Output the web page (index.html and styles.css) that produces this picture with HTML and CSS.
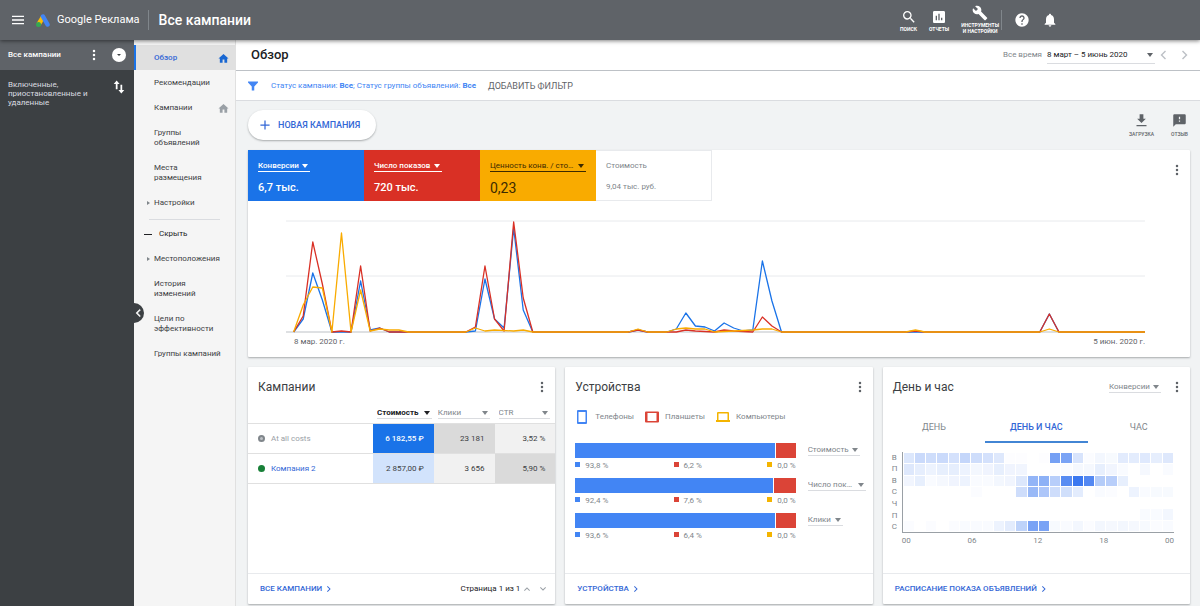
FILE: index.html
```html
<!DOCTYPE html>
<html lang="ru">
<head>
  <meta charset="UTF-8">
  <meta name="viewport" content="width=device-width, initial-scale=1.0">
  <title>Обзор</title>
  <link rel="stylesheet" href="styles.css">
</head>
<body>
  <!-- Icon set -->
  <svg class="sprite" aria-hidden="true">
    <symbol id="i-menu" viewBox="0 0 24 24"><path d="M3 18.500h18v-2H3v2zm0-5.500h18v-2H3v2zm0-7.500v2h18v-2H3z"/></symbol>
    <symbol id="i-more" viewBox="0 0 24 24"><path d="M12 6.500a2.500 2.500 0 1 0 0-5 2.500 2.500 0 0 0 0 5zm0 8a2.500 2.500 0 1 0 0-5 2.500 2.500 0 0 0 0 5zm0 8a2.500 2.500 0 1 0 0-5 2.500 2.500 0 0 0 0 5z"/></symbol>
    <symbol id="i-swap" viewBox="0 0 24 24"><path d="M8 1L3 7h3.500v9h3V7H13zM17.500 17V8h-3v9H11l5 6 5-6z"/></symbol>
    <symbol id="i-home" viewBox="0 0 24 24"><path d="M10 21v-7h4v7h6v-9h3L12 2 1 12h3v9z"/></symbol>
    <symbol id="i-search" viewBox="0 0 24 24"><path d="M15.500 14h-.79l-.28-.27A6.471 6.471 0 0 0 16 9.500 6.500 6.500 0 1 0 9.500 16c1.610 0 3.090-.59 4.230-1.570l.27.28v.79l5 4.990L20.490 19l-4.990-5zm-6 0C7.010 14 5 11.990 5 9.500S7.010 5 9.500 5 14 7.010 14 9.500 11.990 14 9.500 14z"/></symbol>
    <symbol id="i-report" viewBox="0 0 24 24"><path d="M19 3H5c-1.100 0-2 .9-2 2v14c0 1.100.9 2 2 2h14c1.100 0 2-.9 2-2V5c0-1.100-.9-2-2-2zM9 17H7v-7h2v7zm4 0h-2V7h2v10zm4 0h-2v-4h2v4z"/></symbol>
    <symbol id="i-tools" viewBox="0 0 24 24"><path d="M22.700 19l-9.100-9.100c.9-2.300.4-5-1.500-6.900-2-2-5-2.400-7.400-1.300L9 6 6 9 1.600 4.700C.4 7.100.9 10.100 2.900 12.100c1.900 1.900 4.600 2.400 6.900 1.500l9.100 9.100c.4.4 1 .4 1.400 0l2.300-2.300c.5-.4.5-1.100.1-1.400z"/></symbol>
    <symbol id="i-help" viewBox="0 0 24 24"><path d="M12 2C6.480 2 2 6.480 2 12s4.480 10 10 10 10-4.480 10-10S17.520 2 12 2zm1 17h-2v-2h2v2zm2.070-7.750l-.9.920C13.450 12.900 13 13.500 13 15h-2v-.5c0-1.100.45-2.100 1.170-2.830l1.240-1.260c.37-.36.59-.86.59-1.410 0-1.100-.9-2-2-2s-2 .9-2 2H8c0-2.210 1.790-4 4-4s4 1.790 4 4c0 .88-.36 1.680-.93 2.250z"/></symbol>
    <symbol id="i-bell" viewBox="0 0 24 24"><path d="M12 22c1.100 0 2-.9 2-2h-4c0 1.100.89 2 2 2zm6-6v-5c0-3.070-1.640-5.640-4.500-6.320V4c0-.83-.67-1.500-1.500-1.500s-1.500.67-1.500 1.500v.68C7.630 5.360 6 7.920 6 11v5l-2 2v1h16v-1l-2-2z"/></symbol>
    <symbol id="i-filter" viewBox="0 0 24 24"><path d="M2 3h20v2l-7.500 8v8h-5v-8L2 5z"/></symbol>
    <symbol id="i-plus" viewBox="0 0 24 24"><path d="M23 13.500h-9.500V23h-3v-9.500H1v-3h9.500V1h3v9.500H23z"/></symbol>
    <symbol id="i-download" viewBox="0 0 24 24"><path d="M19 9h-4V2H9v7H5l7 7 7-7zM4 19v2h16v-2H4z"/></symbol>
    <symbol id="i-feedback" viewBox="0 0 24 24"><path d="M20 2H4c-1.100 0-2 .9-2 2v18l4-4h14c1.100 0 2-.9 2-2V4c0-1.100-.9-2-2-2zm-7 12h-2v-2h2v2zm0-4h-2V6h2v4z"/></symbol>
    <symbol id="i-right" viewBox="0 0 24 24"><path d="M8 3L6 5l7 7-7 7 2 2 9-9z"/></symbol>
    <symbol id="i-left" viewBox="0 0 24 24"><path d="M16 3l2 2-7 7 7 7-2 2-9-9z"/></symbol>
    <symbol id="i-up" viewBox="0 0 24 24"><path d="M3 16l2 2 7-7 7 7 2-2-9-9z"/></symbol>
    <symbol id="i-down" viewBox="0 0 24 24"><path d="M3 8l2-2 7 7 7-7 2 2-9 9z"/></symbol>
    <symbol id="i-phone" viewBox="0 0 14 14"><path fill-rule="evenodd" d="M3 0h8a1 1 0 0 1 1 1v12a1 1 0 0 1-1 1H3a1 1 0 0 1-1-1V1a1 1 0 0 1 1-1zM3.500 2v10h7V2z"/></symbol>
    <symbol id="i-tablet" viewBox="0 0 14 14"><path fill-rule="evenodd" d="M1 1.500h12a1 1 0 0 1 1 1v9a1 1 0 0 1-1 1H1a1 1 0 0 1-1-1v-9a1 1 0 0 1 1-1zM2.500 3v8h9V3z"/></symbol>
    <symbol id="i-laptop" viewBox="0 0 14 14"><path fill-rule="evenodd" d="M2 2h10a1 1 0 0 1 1 1v7h1v2H0v-2h1V3a1 1 0 0 1 1-1zM2.500 3.500V10h9V3.500z"/></symbol>
  </svg>

  <header class="topbar">
    <button class="icon-btn menu-btn" aria-label="Меню"><svg class="icon"><use href="#i-menu"/></svg></button>
    <a class="logo" href="#">
      <svg class="logo-mark" viewBox="0 0 28 26">
        <path d="M5 21L14 6" stroke="#fbbc04" stroke-width="9"/>
        <path d="M14 5L23 21" stroke="#4285f4" stroke-width="9" stroke-linecap="round"/>
        <circle cx="5" cy="21" r="5" fill="#34a853"/>
      </svg>
      <span>Google Реклама</span>
    </a>
    <h1 class="topbar-title">Все кампании</h1>
    <nav class="tools">
      <button class="tool"><svg class="icon"><use href="#i-search"/></svg>ПОИСК</button>
      <button class="tool"><svg class="icon"><use href="#i-report"/></svg>ОТЧЕТЫ</button>
      <button class="tool tool-settings"><svg class="icon"><use href="#i-tools"/></svg>ИНСТРУМЕНТЫ<br>И НАСТРОЙКИ</button>
      <button class="icon-btn" aria-label="Справка"><svg class="icon"><use href="#i-help"/></svg></button>
      <button class="icon-btn" aria-label="Уведомления"><svg class="icon"><use href="#i-bell"/></svg></button>
    </nav>
  </header>

  <div class="layout">
    <aside class="accounts">
      <div class="accounts-head">
        <span>Все кампании</span>
        <button class="icon-btn" aria-label="Ещё"><svg class="icon"><use href="#i-more"/></svg></button>
        <button class="round-btn" aria-label="Развернуть"></button>
      </div>
      <div class="accounts-filter">
        <span>Включенные, приостановленные и удаленные</span>
        <button class="icon-btn" aria-label="Сортировка"><svg class="icon"><use href="#i-swap"/></svg></button>
      </div>
    </aside>

    <nav class="sidenav">
      <button class="collapse" aria-label="Свернуть"><svg class="icon"><use href="#i-left"/></svg></button>
      <a class="nav-item active" href="#">Обзор<svg class="icon"><use href="#i-home"/></svg></a>
      <a class="nav-item" href="#">Рекомендации</a>
      <a class="nav-item" href="#">Кампании<svg class="icon"><use href="#i-home"/></svg></a>
      <a class="nav-item" href="#">Группы<br>объявлений</a>
      <a class="nav-item" href="#">Места<br>размещения</a>
      <a class="nav-item expandable" href="#">Настройки</a>
      <hr>
      <button class="nav-item nav-hide">Скрыть</button>
      <a class="nav-item expandable" href="#">Местоположения</a>
      <a class="nav-item" href="#">История<br>изменений</a>
      <a class="nav-item" href="#">Цели по<br>эффективности</a>
      <a class="nav-item" href="#">Группы кампаний</a>
    </nav>

    <main class="main">
      <div class="page-head">
        <h2>Обзор</h2>
        <label class="period-label" for="period">Все время</label>
        <span class="picker picker-period"><select id="period"><option>8 март – 5 июнь 2020</option></select></span>
        <button class="icon-btn" aria-label="Назад"><svg class="icon"><use href="#i-left"/></svg></button>
        <button class="icon-btn" aria-label="Вперёд"><svg class="icon"><use href="#i-right"/></svg></button>
      </div>

      <div class="filters">
        <svg class="icon"><use href="#i-filter"/></svg>
        <a href="#">Статус кампании: <b>Все</b>; Статус группы объявлений: <b>Все</b></a>
        <button class="add-filter">ДОБАВИТЬ ФИЛЬТР</button>
      </div>

      <div class="content">
        <div class="actions">
          <button class="new-campaign"><svg class="icon"><use href="#i-plus"/></svg>НОВАЯ КАМПАНИЯ</button>
          <button class="action"><svg class="icon"><use href="#i-download"/></svg>ЗАГРУЗКА</button>
          <button class="action"><svg class="icon"><use href="#i-feedback"/></svg>ОТЗЫВ</button>
        </div>

        <section class="card summary">
          <div class="scores">
            <div class="score blue">
              <span class="picker"><select aria-label="Показатель 1"><option>Конверсии</option></select></span>
              <strong>6,7 тыс.</strong>
            </div>
            <div class="score red">
              <span class="picker"><select aria-label="Показатель 2"><option>Число показов</option></select></span>
              <strong>720 тыс.</strong>
            </div>
            <div class="score yellow">
              <span class="picker"><select aria-label="Показатель 3"><option>Ценность конв. / стоимость</option></select></span>
              <strong>0,23</strong>
            </div>
            <div class="score plain">
              <span>Стоимость</span>
              <strong>9,04 тыс. руб.</strong>
            </div>
            <button class="icon-btn more" aria-label="Ещё"><svg class="icon"><use href="#i-more"/></svg></button>
          </div>
          <div class="chart">
            <!-- one day is 10 units wide, the baseline is at y = 112 -->
            <svg viewBox="-8 0 898 114" preserveAspectRatio="none">
              <path class="grid-line" d="M-8 1H890M-8 56H890"/>
              <path class="grid-line base" d="M-8 112H890"/>
              <polyline class="line-blue" points="0,112 10,99 20,53 30,80 40,112 60,112 70,61 80,110 90,108 100,112 180,112 190,111 200,59 210,99 220,108 230,8 240,90 250,112 350,112 360,110 370,112 390,112 400,109 410,93 420,106 430,107 440,111 450,103 460,108 470,111 480,110 490,41 500,81 510,112 780,112 790,94 800,112 890,112"/>
              <polyline class="line-red" points="0,112 10,96 20,22 30,64 40,112 50,111 60,112 70,46 80,111 90,108 100,112 180,112 190,107 200,46 210,99 220,111 230,2 240,78 250,112 350,112 360,110 370,112 400,112 410,110 420,111 440,112 450,110 460,111 480,112 490,97 500,106 510,112 640,112 650,111 660,112 780,112 790,94 800,112 890,112"/>
              <polyline class="line-yellow" points="0,112 10,85 20,67 30,68 40,112 50,13 60,112 70,70 80,111 90,109 100,110 110,110 120,112 180,112 190,108 200,111 210,110 230,111 240,110 250,112 350,112 360,109 370,112 390,112 400,109 410,108 420,109 430,109 440,112 460,111 480,110 490,109 500,109 510,112 640,112 650,110 660,112 780,112 790,109 800,112 890,112"/>
            </svg>
            <div class="chart-dates"><span>8 мар. 2020 г.</span><span>5 июн. 2020 г.</span></div>
          </div>
        </section>

        <div class="cards">
          <section class="card">
            <div class="card-head">
              <h3>Кампании</h3>
              <button class="icon-btn more" aria-label="Ещё"><svg class="icon"><use href="#i-more"/></svg></button>
            </div>
            <table class="campaigns">
              <thead>
                <tr>
                  <th></th>
                  <th class="sorted"><span class="picker"><select aria-label="Столбец 1"><option>Стоимость</option></select></span></th>
                  <th><span class="picker"><select aria-label="Столбец 2"><option>Клики</option></select></span></th>
                  <th><span class="picker"><select aria-label="Столбец 3"><option>CTR</option></select></span></th>
                </tr>
              </thead>
              <tbody>
                <tr>
                  <td class="name paused"><i class="dot"></i>At all costs</td>
                  <td class="heat-top">6 182,55 ₽</td>
                  <td class="gray-2">23 181</td>
                  <td class="gray-1">3,52 %</td>
                </tr>
                <tr>
                  <td class="name"><i class="dot"></i><a href="#">Компания 2</a></td>
                  <td class="heat-low">2 857,00 ₽</td>
                  <td class="gray-1">3 656</td>
                  <td class="gray-2">5,90 %</td>
                </tr>
              </tbody>
            </table>
            <div class="card-foot">
              <a href="#">ВСЕ КАМПАНИИ<svg class="icon"><use href="#i-right"/></svg></a>
              <span class="pager">Страница 1 из 1
                <button class="icon-btn" aria-label="Предыдущая"><svg class="icon"><use href="#i-up"/></svg></button>
                <button class="icon-btn" aria-label="Следующая"><svg class="icon"><use href="#i-down"/></svg></button>
              </span>
            </div>
          </section>

          <section class="card">
            <div class="card-head">
              <h3>Устройства</h3>
              <button class="icon-btn more" aria-label="Ещё"><svg class="icon"><use href="#i-more"/></svg></button>
            </div>
            <div class="legend">
              <span><svg class="icon c-blue"><use href="#i-phone"/></svg>Телефоны</span>
              <span><svg class="icon c-red"><use href="#i-tablet"/></svg>Планшеты</span>
              <span><svg class="icon c-yellow"><use href="#i-laptop"/></svg>Компьютеры</span>
            </div>
            <div class="devices">
              <div class="device-row">
                <div class="device-data">
                  <div class="bar"><i style="width: 91%"></i></div>
                  <div class="shares"><span>93,8 %</span><span>6,2 %</span><span>0,0 %</span></div>
                </div>
                <span class="picker"><select aria-label="Полоса 1"><option>Стоимость</option></select></span>
              </div>
              <div class="device-row">
                <div class="device-data">
                  <div class="bar"><i style="width: 90%"></i></div>
                  <div class="shares"><span>92,4 %</span><span>7,6 %</span><span>0,0 %</span></div>
                </div>
                <span class="picker"><select aria-label="Полоса 2"><option>Число показов</option></select></span>
              </div>
              <div class="device-row">
                <div class="device-data">
                  <div class="bar"><i style="width: 91%"></i></div>
                  <div class="shares"><span>93,6 %</span><span>6,4 %</span><span>0,0 %</span></div>
                </div>
                <span class="picker"><select aria-label="Полоса 3"><option>Клики</option></select></span>
              </div>
            </div>
            <div class="card-foot">
              <a href="#">УСТРОЙСТВА<svg class="icon"><use href="#i-right"/></svg></a>
            </div>
          </section>

          <section class="card">
            <div class="card-head">
              <h3>День и час</h3>
              <span class="picker"><select aria-label="Показатель"><option>Конверсии</option></select></span>
              <button class="icon-btn more" aria-label="Ещё"><svg class="icon"><use href="#i-more"/></svg></button>
            </div>
            <div class="tabs">
              <button>ДЕНЬ</button>
              <button class="active">ДЕНЬ И ЧАС</button>
              <button>ЧАС</button>
            </div>
            <div class="heatmap">
              <div class="days"><span>В</span><span>П</span><span>В</span><span>С</span><span>Ч</span><span>П</span><span>С</span></div>
              <div class="cells" id="cells"></div>
              <div class="hours"><span>00</span><span>06</span><span>12</span><span>18</span><span>00</span></div>
            </div>
            <div class="card-foot">
              <a href="#">РАСПИСАНИЕ ПОКАЗА ОБЪЯВЛЕНИЙ<svg class="icon"><use href="#i-right"/></svg></a>
            </div>
          </section>
        </div>
      </div>
    </main>
  </div>

  <script src="script.js"></script>
</body>
</html>
```
FILE: styles.css
```css
* {
  margin: 0;
  padding: 0;
  box-sizing: border-box;
}

body {
  font-family: Roboto, "Liberation Sans", sans-serif;
  font-size: 8px;
  line-height: 10px;
  color: #3c4043;
  background: #f1f3f4;
  min-height: 100vh;
  display: flex;
  flex-direction: column;
}

a {
  color: #3367d6;
  text-decoration: none;
}

button,
select {
  font: inherit;
  color: inherit;
  background: none;
  border: none;
  cursor: pointer;
}

.sprite {
  display: none;
}

.icon {
  width: 12px;
  height: 12px;
  fill: currentColor;
  flex: none;
}

.icon-btn {
  display: flex;
  flex: none;
}

/* Drop-down with a thin underline and a triangle */
.picker {
  display: inline-flex;
  align-items: center;
  gap: 3px;
  height: 12px;
  border-bottom: 1px solid #dadce0;
  color: #80868b;
  max-width: 100%;
}

.picker select {
  appearance: none;
  outline: none;
  min-width: 0;
  height: 11px;
  text-overflow: ellipsis;
}

.picker::after {
  content: "";
  flex: none;
  margin-left: auto;
  margin-right: 2px;
  border: 3px solid transparent;
  border-top: 4px solid currentColor;
  border-bottom: none;
}

/* Top bar */
.topbar {
  height: 40px;
  display: flex;
  align-items: center;
  background: #5f6368;
  color: #fff;
  padding: 0 142px 0 10px;
  box-shadow: 0 1px 4px rgba(0, 0, 0, 0.5);
  position: relative;
  z-index: 2;
}

.menu-btn .icon {
  width: 16px;
  height: 16px;
}

.logo {
  display: flex;
  align-items: center;
  gap: 7px;
  margin-left: 10px;
  padding-right: 8px;
  height: 20px;
  color: #fff;
  font-size: 11px;
  border-right: 1px solid #80868b;
}

.logo-mark {
  width: 14px;
  height: 13px;
}

.topbar-title {
  font-size: 14px;
  font-weight: 500;
  margin-left: 10px;
}

.tools {
  margin-left: auto;
  display: flex;
  align-items: center;
  gap: 12px;
}

.tools .icon {
  width: 16px;
  height: 16px;
}

.tool {
  display: flex;
  flex-direction: column;
  align-items: center;
  font-size: 5px;
  font-weight: 700;
  line-height: 6px;
}

.tool .icon {
  margin-bottom: 1px;
}

.tool-settings {
  padding-bottom: 2px;
}

.tool-settings + .icon-btn {
  border-left: 1px solid #80868b;
  padding: 2px 0 2px 12px;
  margin-left: -10px;
}

.layout {
  flex: 1;
  display: flex;
}

/* Account column */
.accounts {
  width: 134px;
  flex: none;
  background: #3c4043;
  color: #dadce0;
}

.accounts-head,
.accounts-filter {
  display: flex;
  align-items: center;
  padding: 0 8px;
}

.accounts-head {
  height: 30px;
  gap: 12px;
  background: #5f6368;
  color: #fff;
  font-weight: 500;
}

.accounts-head span,
.accounts-filter span {
  flex: 1;
}

.accounts-filter {
  align-items: flex-start;
  padding-top: 10px;
  line-height: 9px;
}

.accounts-filter .icon {
  width: 14px;
  height: 14px;
  color: #fff;
}

.round-btn {
  width: 14px;
  height: 14px;
  border-radius: 50%;
  background: #fff;
  display: flex;
  align-items: center;
  justify-content: center;
}

.round-btn::after {
  content: "";
  border: 2px solid transparent;
  border-top-color: #3c4043;
  border-bottom: none;
}

/* Section navigation */
.sidenav {
  width: 102px;
  flex: none;
  padding-top: 5px;
  background: #f5f5f5;
  border-right: 1px solid #e0e0e0;
  position: relative;
}

.nav-item {
  display: flex;
  align-items: center;
  width: 100%;
  min-height: 25px;
  padding: 8px 6px 7px 20px;
  color: #3c4043;
  white-space: nowrap;
}

.nav-item .icon {
  width: 11px;
  height: 11px;
  margin: -1px 0 -1px auto;
  color: #9aa0a6;
}

.nav-item.active {
  padding-left: 18px;
  border-left: 2px solid #1a73e8;
  background: #e0e0e0;
  color: #3367d6;
  font-weight: 500;
}

.nav-item.active .icon {
  color: #1967d2;
}

.expandable {
  padding-left: 13px;
}

.expandable::before {
  content: "";
  border: 2px solid transparent;
  border-left: 3px solid #80868b;
  border-right: none;
  margin-right: 4px;
}

.sidenav hr {
  border: none;
  border-top: 1px solid #dadce0;
  margin: 4px 15px 1px;
}

.nav-hide {
  padding-left: 10px;
  color: #202124;
}

.nav-hide::before {
  content: "";
  width: 8px;
  height: 1px;
  background: #202124;
  margin-right: 7px;
}

.collapse {
  position: absolute;
  left: 0;
  top: 263px;
  width: 10px;
  height: 20px;
  border-radius: 0 10px 10px 0;
  background: #3c4043;
  color: #fff;
  display: flex;
  align-items: center;
  justify-content: center;
}

.collapse .icon {
  width: 10px;
  height: 10px;
  margin-right: 3px;
  stroke: #fff;
}

/* Main column */
.main {
  flex: 1;
  min-width: 0;
}

.page-head,
.filters {
  display: flex;
  align-items: center;
  background: #fff;
  padding: 0 9px 0 15px;
}

.page-head {
  height: 31px;
  border-bottom: 1px solid #bdc1c6;
}

.page-head h2 {
  flex: 1;
  font-size: 13px;
  font-weight: 500;
  color: #202124;
}

.period-label {
  color: #80868b;
  margin-right: 5px;
}

.picker-period {
  width: 108px;
  height: 18px;
  margin-right: 2px;
  color: #202124;
}

.picker-period::after {
  border-top-color: #5f6368;
}

.page-head .icon-btn {
  color: #bdc1c6;
}

.page-head .icon-btn + .icon-btn {
  margin-left: 10px;
}

.filters {
  height: 30px;
  padding-left: 11px;
  border-bottom: 1px solid #dadce0;
}

.filters .icon {
  color: #4285f4;
  margin-right: 12px;
}

.filters a {
  color: #4285f4;
}

.add-filter {
  margin-left: 12px;
  color: #5f6368;
  font-size: 9px;
}

.content {
  padding: 9px 10px 2px 12px;
}

.actions {
  display: flex;
  align-items: center;
  gap: 17px;
  padding-right: 2px;
  margin-bottom: 10px;
}

.new-campaign {
  display: flex;
  align-items: center;
  gap: 8px;
  height: 30px;
  padding: 0 16px 0 12px;
  margin-right: auto;
  border-radius: 15px;
  background: #fff;
  color: #3367d6;
  font-size: 9px;
  font-weight: 500;
  box-shadow: 0 1px 2px rgba(60, 64, 67, 0.4);
}

.new-campaign .icon {
  width: 10px;
  height: 10px;
}

.action {
  display: flex;
  flex-direction: column;
  align-items: center;
  gap: 2px;
  color: #5f6368;
  font-size: 5px;
  font-weight: 500;
  line-height: 8px;
}

.action .icon {
  width: 15px;
  height: 15px;
}

.card {
  background: #fff;
  border-radius: 1px;
  box-shadow: 0 1px 2px rgba(60, 64, 67, 0.4);
}

.more {
  color: #5f6368;
}

/* Scores and line chart */
.scores {
  display: flex;
}

.score {
  width: 116px;
  height: 51px;
  padding: 10px 10px 8px;
  display: flex;
  flex-direction: column;
  align-items: flex-start;
  justify-content: space-between;
  color: #fff;
}

.score .picker {
  color: inherit;
  border-color: currentColor;
  font-weight: 500;
}

.score strong {
  font-size: 11px;
  font-weight: 500;
}

.score.blue {
  background: #1a73e8;
}

.score.red {
  background: #d93025;
}

.score.yellow {
  background: #f9ab00;
  color: #3c2a00;
}

.score.yellow .picker {
  font-weight: 400;
}

.score.yellow strong {
  font-size: 14px;
  font-weight: 400;
}

.score.plain {
  color: #80868b;
  border: 1px solid #e8eaed;
  border-left: none;
}

.score.plain strong {
  font-size: 8px;
  font-weight: 400;
}

.scores .more {
  margin: 14px 7px 0 auto;
  align-self: flex-start;
}

.chart {
  padding: 19px 45px 10px 38px;
}

.chart svg {
  display: block;
  width: 100%;
  height: 114px;
  overflow: visible;
}

.chart path,
.chart polyline {
  fill: none;
  stroke-width: 1.3;
  stroke-linejoin: round;
  vector-effect: non-scaling-stroke;
}

.chart .grid-line {
  stroke: #e8eaed;
  stroke-width: 1;
}

.chart .base {
  stroke: #bdc1c6;
}

.chart .line-blue {
  stroke: #1a73e8;
}

.chart .line-red {
  stroke: #d93025;
}

.chart .line-yellow {
  stroke: #f9ab00;
}

.chart-dates {
  display: flex;
  justify-content: space-between;
  padding: 3px 0 0 8px;
  color: #5f6368;
}

/* Bottom cards */
.cards {
  display: grid;
  grid-template-columns: repeat(3, 1fr);
  gap: 10px;
  margin-top: 10px;
}

.cards .card {
  min-height: 237px;
  min-width: 0;
  display: flex;
  flex-direction: column;
}

.card-head {
  display: flex;
  align-items: center;
  gap: 10px;
  height: 40px;
  padding: 0 7px 0 10px;
  flex: none;
}

.card-head h3 {
  flex: 1;
  font-size: 12px;
  font-weight: 400;
}

.card-foot {
  display: flex;
  align-items: center;
  justify-content: space-between;
  height: 31px;
  margin-top: auto;
  padding: 0 8px 0 12px;
  border-top: 1px solid #e8eaed;
  font-weight: 500;
}

.card-foot a,
.pager {
  display: flex;
  align-items: center;
  gap: 3px;
}

.card-foot .icon {
  width: 8px;
  height: 8px;
}

.pager {
  font-weight: 400;
  color: #202124;
}

.pager .icon-btn {
  color: #9aa0a6;
}

.pager .icon-btn + .icon-btn {
  margin-left: 5px;
}

.campaigns {
  width: 100%;
  table-layout: fixed;
  border-collapse: collapse;
}

.campaigns th {
  height: 15px;
  padding: 0 5px 4px 4px;
  font-weight: 400;
  text-align: left;
}

.campaigns th:first-child {
  width: 125px;
}

.campaigns .picker {
  display: flex;
}

.campaigns .sorted {
  padding-right: 2px;
}

.campaigns .sorted .picker {
  color: #202124;
  font-weight: 700;
}

.campaigns td {
  height: 30px;
  padding: 0 10px;
  border-top: 1px solid #e0e0e0;
  border-bottom: 1px solid #e0e0e0;
  text-align: right;
}

.campaigns .name {
  text-align: left;
}

.campaigns .paused {
  color: #9aa0a6;
}

.dot {
  display: inline-block;
  width: 7px;
  height: 7px;
  margin-right: 6px;
  border-radius: 50%;
  background: #188038;
  vertical-align: -1px;
}

.paused .dot {
  background: #bdc1c6;
  border: 2px solid #80868b;
}

.campaigns .heat-top {
  background: #1a73e8;
  color: #fff;
  font-weight: 500;
}

.campaigns .heat-low {
  background: #d2e3fc;
}

.gray-1 {
  background: #f1f1f1;
}

.gray-2 {
  background: #dadada;
}

/* Devices */
.legend {
  display: flex;
  gap: 11px;
  padding: 3px 10px 0;
  color: #80868b;
}

.legend span {
  display: flex;
  align-items: center;
  gap: 6px;
}

.legend .icon {
  width: 14px;
  height: 14px;
}

.c-blue {
  color: #4285f4;
}

.c-red {
  color: #db4437;
}

.c-yellow {
  color: #f4b400;
}

.devices {
  display: flex;
  flex-direction: column;
  gap: 7px;
  padding: 19px 7px 0 10px;
}

.device-row {
  display: grid;
  grid-template-columns: 1fr 58px;
  gap: 12px;
  color: #80868b;
}

.bar {
  display: flex;
  height: 15px;
  background: #db4437;
}

.bar i {
  background: #4285f4;
  border-right: 1px solid #fff;
}

.shares {
  display: flex;
  justify-content: space-between;
  padding-top: 3px;
}

.shares span::before {
  content: "";
  display: inline-block;
  width: 5px;
  height: 5px;
  margin-right: 5px;
  background: #4285f4;
  vertical-align: 1px;
}

.shares span:nth-child(2)::before {
  background: #db4437;
}

.shares span:nth-child(3)::before {
  background: #f4b400;
}

.device-row .picker {
  justify-self: start;
  margin-top: 1px;
}

/* Day and hour */
.tabs {
  display: grid;
  grid-template-columns: repeat(3, 1fr);
  font-size: 9px;
  color: #80868b;
}

.tabs button {
  height: 36px;
  padding-top: 6px;
  border-bottom: 2px solid transparent;
}

.tabs .active {
  color: #3367d6;
  font-weight: 500;
  border-color: #4285d4;
}

.heatmap {
  display: grid;
  grid-template-columns: 10px 1fr;
  padding: 9px 16px 0 9px;
  color: #80868b;
}

.days {
  display: grid;
  grid-template-rows: repeat(7, 1fr);
  align-items: center;
}

.cells {
  display: grid;
  grid-template-columns: repeat(24, 1fr);
  grid-template-rows: repeat(7, 1fr);
  gap: 1px;
  height: 81px;
  padding: 1px;
  border-left: 1px solid #9aa0a6;
  border-bottom: 1px solid #9aa0a6;
}

.cells i {
  background: #3b78f0;
}

.hours {
  grid-column: 2;
  display: flex;
  justify-content: space-between;
  padding-top: 3px;
}
```
FILE: script.js
```js
// Share of the maximum for each hour, one row per weekday
const conversions = [
  [18, 27, 25, 27, 22, 30, 25, 22, 17, 1, 1, 0, 1, 70, 68, 20, 2, 6, 4, 15, 14, 16, 13, 17],
  [17, 13, 9, 12, 13, 9, 6, 8, 12, 8, 7, 0, 0, 1, 2, 5, 5, 12, 7, 3, 0, 5, 0, 3],
  [7, 12, 3, 5, 8, 9, 3, 3, 6, 7, 18, 55, 58, 36, 85, 100, 88, 38, 36, 12, 0, 0, 0, 0],
  [0, 0, 0, 0, 0, 0, 2, 0, 0, 0, 25, 52, 42, 25, 24, 14, 0, 3, 2, 0, 9, 3, 4, 4],
  [0, 0, 0, 0, 0, 0, 0, 0, 0, 0, 0, 0, 0, 0, 0, 0, 0, 0, 0, 0, 0, 0, 0, 0],
  [0, 0, 0, 0, 0, 0, 0, 0, 0, 0, 0, 0, 0, 0, 0, 0, 0, 0, 0, 0, 0, 3, 3, 6],
  [2, 0, 2, 0, 2, 3, 3, 3, 9, 14, 33, 68, 68, 4, 3, 6, 2, 6, 5, 6, 5, 4, 2, 3]
];

const cells = document.getElementById("cells");

conversions.flat().forEach(value => {
  const cell = document.createElement("i");
  cell.style.opacity = value / 100;
  cells.appendChild(cell);
});
```
